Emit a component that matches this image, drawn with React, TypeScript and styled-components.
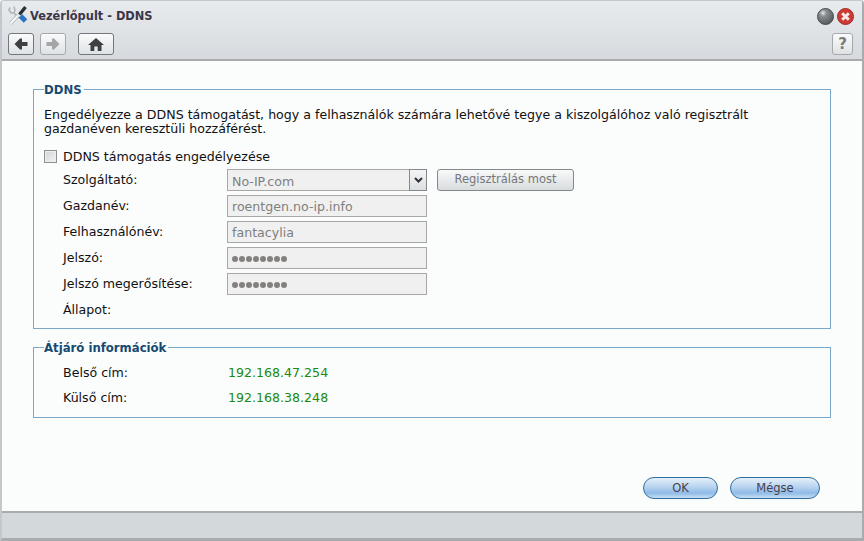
import React from 'react';
import styled, { createGlobalStyle } from 'styled-components';

const GlobalStyle = createGlobalStyle`
  html, body {
    margin: 0;
    padding: 0;
    background: #f0f2f3;
    font-family: "DejaVu Sans", Verdana, sans-serif;
    font-size: 12.6px;
    overflow: hidden;
  }
  * { box-sizing: border-box; }
`;

const Win = styled.div`
  width: 864px;
  height: 541px;
  display: flex;
  flex-direction: column;
  background: #d3d8db;
  border-right: 2px solid #a9acae;
  border-bottom: 3px solid #a9acae;
  border-left: 2px solid #c4c8ca;
  border-top: 1px solid #c4c8ca;
  border-radius: 4px 4px 0 0;
`;

const Head = styled.div`
  height: 60px;
  background: linear-gradient(#e8ebee, #d6dade);
  border-bottom: 2px solid #a9acae;
  display: flex;
  flex-direction: column;
  flex-shrink: 0;
`;

const TitleBar = styled.div`
  height: 30px;
  display: flex;
  align-items: center;
  padding: 0 4px 0 5px;
`;

const Title = styled.div`
  margin-left: 1px;
  font-weight: bold;
  font-size: 11.4px;
  color: #3a3648;
`;

const WinControls = styled.div`
  margin-left: auto;
  display: flex;
  gap: 3px;
  padding-right: 4px;
`;

const ToolBar = styled.div`
  height: 26px;
  display: flex;
  align-items: center;
  padding: 0 9px 0 6px;
`;

const ToolButton = styled.button<{ $w: number; $gap: number; $dim?: boolean }>`
  width: ${(p) => p.$w}px;
  height: 22px;
  margin-right: ${(p) => p.$gap}px;
  padding: 0;
  display: flex;
  align-items: center;
  justify-content: center;
  border: 1px solid ${(p) => (p.$dim ? '#a6a9ac' : '#74777a')};
  border-radius: 3px;
  background: linear-gradient(#fafbfb, #dfe2e4);
`;

const HelpButton = styled(ToolButton)`
  margin-left: auto;
  margin-right: 0;
  font-family: "DejaVu Sans", sans-serif;
  font-weight: bold;
  font-size: 15px;
  color: #7a7d80;
`;

const Content = styled.div`
  flex: 1;
  background: #fbfcfc;
  padding: 20px 31px 0 31px;
  display: flex;
  flex-direction: column;
`;

const Group = styled.fieldset<{ $h: number }>`
  margin: 0;
  padding: 0 10px 0 10px;
  height: ${(p) => p.$h}px;
  min-width: 0;
  border: 1px solid #7ba7c9;
  & + & {
    margin-top: 10px;
  }
`;

const Legend = styled.legend`
  padding: 2px 2px 0 0;
  font-weight: bold;
  font-size: 11.7px;
  line-height: 14px;
  color: #174a72;
`;

const Desc = styled.p`
  margin: 11px 0 0 0;
  line-height: 14px;
  color: #111;
  white-space: nowrap;
`;

const CheckRow = styled.label`
  display: flex;
  align-items: center;
  height: 16px;
  margin-top: 12px;
  color: #111;
`;

const Check = styled.span`
  width: 13px;
  height: 13px;
  margin-right: 6px;
  border: 1px solid #8d8f92;
  background: linear-gradient(135deg, #d2d3d5, #f3f3f4);
  box-shadow: inset 0 0 0 1px #eceded;
`;

const Rows = styled.div`
  display: flex;
  flex-direction: column;
  gap: 4px;
  margin-top: 5px;
  padding-left: 19px;
`;

const Row = styled.div`
  display: flex;
  align-items: center;
  height: 22px;
`;

const Label = styled.div`
  width: 164px;
  flex-shrink: 0;
  color: #111;
  padding-bottom: 1px;
`;

const Field = styled.div<{ $select?: boolean }>`
  width: 200px;
  height: 22px;
  display: flex;
  align-items: center;
  padding-left: 4px;
  padding-top: ${(p) => (p.$select ? 2 : 0)}px;
  background: #f0f0f0;
  border: 1px solid #a7a7a7;
  color: #7f7f7f;
  position: relative;
`;

const Arrow = styled.span`
  position: absolute;
  top: -1px;
  right: -1px;
  width: 18px;
  height: 22px;
  display: flex;
  align-items: center;
  justify-content: center;
  background: linear-gradient(#f4f5f5, #dcdfe1);
  border: 1px solid #85888a;
`;

const Dots = styled.span`
  display: flex;
  gap: 1px;
  padding-top: 1px;
`;

const Dot = styled.i`
  width: 6px;
  height: 6px;
  border-radius: 50%;
  background: #858080;
`;

const RegButton = styled.button`
  width: 137px;
  height: 22px;
  margin-left: 10px;
  padding: 0 0 2px 0;
  border: 1px solid #85888a;
  border-radius: 3px;
  background: linear-gradient(#f8f9f9, #d9dcde);
  font-family: inherit;
  font-size: 11.5px;
  color: #75787a;
`;

const InfoRows = styled.div`
  display: flex;
  flex-direction: column;
  margin-top: 5px;
  padding-left: 19px;
`;

const InfoRow = styled.div`
  display: flex;
  align-items: center;
  height: 25px;
`;

const InfoValue = styled.div`
  color: #1c8a0c;
  margin-left: 1px;
  padding-bottom: 1px;
`;

const Actions = styled.div`
  display: flex;
  justify-content: flex-end;
  gap: 12px;
  margin-top: 59px;
  padding-right: 11px;
`;

const PillButton = styled.button<{ $w: number }>`
  width: ${(p) => p.$w}px;
  height: 22px;
  padding: 0;
  border: 1px solid #2f6f9f;
  border-radius: 11px;
  background: linear-gradient(#e6f0fa, #b7d3ef 45%, #8fbbe8 75%, #c9def2);
  font-family: inherit;
  font-size: 11.5px;
  color: #45404f;
`;

const Foot = styled.div`
  height: 27px;
  flex-shrink: 0;
  background: #d3d8db;
  border-top: 2px solid #a9acae;
`;

const ToolIcon = () => (
  <svg width="22" height="22" viewBox="0 0 22 22">
    <path d="M3 2.5 L2 5 L4 8 L7 8 L12 13" fill="none" stroke="#aeb2b6" strokeWidth="1.6" />
    <path d="M7 1.5 L8 5 L7 8" fill="none" stroke="#aeb2b6" strokeWidth="1.4" />
    <path d="M3.5 18.5 L11 10.5" stroke="#a9adb1" strokeWidth="3.6" />
    <path d="M3.5 18.5 L11 10.5" stroke="#f8f8f8" strokeWidth="2.2" />
    <path d="M18.5 2 L12.5 9.5" stroke="#2b2e33" strokeWidth="3.4" />
    <path d="M13.5 11 L18.5 16" stroke="#2a72c4" strokeWidth="5" />
  </svg>
);

const BackIcon = ({ color, flip }: { color: string; flip?: boolean }) => (
  <svg width="14" height="12" viewBox="0 0 14 12" style={flip ? { transform: 'scaleX(-1)' } : undefined}>
    <path d="M6 0.5 L0.5 6 L6 11.5 L8 11.5 L8 8 L13.5 8 L13.5 4 L8 4 L8 0.5 Z" fill={color} />
  </svg>
);

const HomeIcon = () => (
  <svg width="16" height="13" viewBox="0 0 16 13">
    <path d="M8 0 L16 7 L13.5 7 L13.5 13 L9.7 13 L9.7 8.5 L6.3 8.5 L6.3 13 L2.5 13 L2.5 7 L0 7 Z" fill="#3d4043" />
  </svg>
);

const MinIcon = () => (
  <svg width="17" height="17" viewBox="0 0 17 17">
    <defs>
      <radialGradient id="ming" cx="0.35" cy="0.28" r="0.85">
        <stop offset="0" stopColor="#e6e8e9" />
        <stop offset="0.25" stopColor="#8a8e90" />
        <stop offset="1" stopColor="#4a4e50" />
      </radialGradient>
    </defs>
    <circle cx="8.5" cy="8.5" r="8" fill="url(#ming)" stroke="#4a4d4f" />
  </svg>
);

const CloseIcon = () => (
  <svg width="17" height="17" viewBox="0 0 17 17">
    <circle cx="8.5" cy="8.5" r="8" fill="#cc3a36" stroke="#a82a28" />
    <path d="M5.2 5.2 L11.8 11.8 M11.8 5.2 L5.2 11.8" stroke="#f6e6e4" strokeWidth="3" />
  </svg>
);

const ChevronIcon = () => (
  <svg width="9" height="6" viewBox="0 0 9 6">
    <path d="M1 1 L4.5 4.5 L8 1" fill="none" stroke="#30343a" strokeWidth="2" />
  </svg>
);

const DotField = () => (
  <Field>
    <Dots>
      {Array.from({ length: 8 }).map((_, i) => (
        <Dot key={i} />
      ))}
    </Dots>
  </Field>
);

export default function App() {
  return (
    <>
      <GlobalStyle />
      <Win>
        <Head>
          <TitleBar>
            <ToolIcon />
            <Title>Vezérlőpult - DDNS</Title>
            <WinControls>
              <MinIcon />
              <CloseIcon />
            </WinControls>
          </TitleBar>
          <ToolBar>
            <ToolButton $w={26} $gap={6}>
              <BackIcon color="#3d4043" />
            </ToolButton>
            <ToolButton $w={26} $gap={12} $dim>
              <BackIcon color="#a3a6a8" flip />
            </ToolButton>
            <ToolButton $w={36} $gap={0}>
              <HomeIcon />
            </ToolButton>
            <HelpButton $w={21} $gap={0} $dim>
              ?
            </HelpButton>
          </ToolBar>
        </Head>
        <Content>
          <Group $h={248}>
            <Legend>DDNS</Legend>
            <Desc>
              Engedélyezze a DDNS támogatást, hogy a felhasználók számára lehetővé tegye a kiszolgálóhoz való regisztrált
              <br />
              gazdanéven keresztüli hozzáférést.
            </Desc>
            <CheckRow>
              <Check />
              DDNS támogatás engedélyezése
            </CheckRow>
            <Rows>
              <Row>
                <Label>Szolgáltató:</Label>
                <Field $select>
                  No-IP.com
                  <Arrow>
                    <ChevronIcon />
                  </Arrow>
                </Field>
                <RegButton>Regisztrálás most</RegButton>
              </Row>
              <Row>
                <Label>Gazdanév:</Label>
                <Field>roentgen.no-ip.info</Field>
              </Row>
              <Row>
                <Label>Felhasználónév:</Label>
                <Field>fantacylia</Field>
              </Row>
              <Row>
                <Label>Jelszó:</Label>
                <DotField />
              </Row>
              <Row>
                <Label>Jelszó megerősítése:</Label>
                <DotField />
              </Row>
              <Row>
                <Label>Állapot:</Label>
              </Row>
            </Rows>
          </Group>
          <Group $h={79}>
            <Legend>Átjáró információk</Legend>
            <InfoRows>
              <InfoRow>
                <Label>Belső cím:</Label>
                <InfoValue>192.168.47.254</InfoValue>
              </InfoRow>
              <InfoRow>
                <Label>Külső cím:</Label>
                <InfoValue>192.168.38.248</InfoValue>
              </InfoRow>
            </InfoRows>
          </Group>
          <Actions>
            <PillButton $w={75}>OK</PillButton>
            <PillButton $w={90}>Mégse</PillButton>
          </Actions>
        </Content>
        <Foot />
      </Win>
    </>
  );
}
